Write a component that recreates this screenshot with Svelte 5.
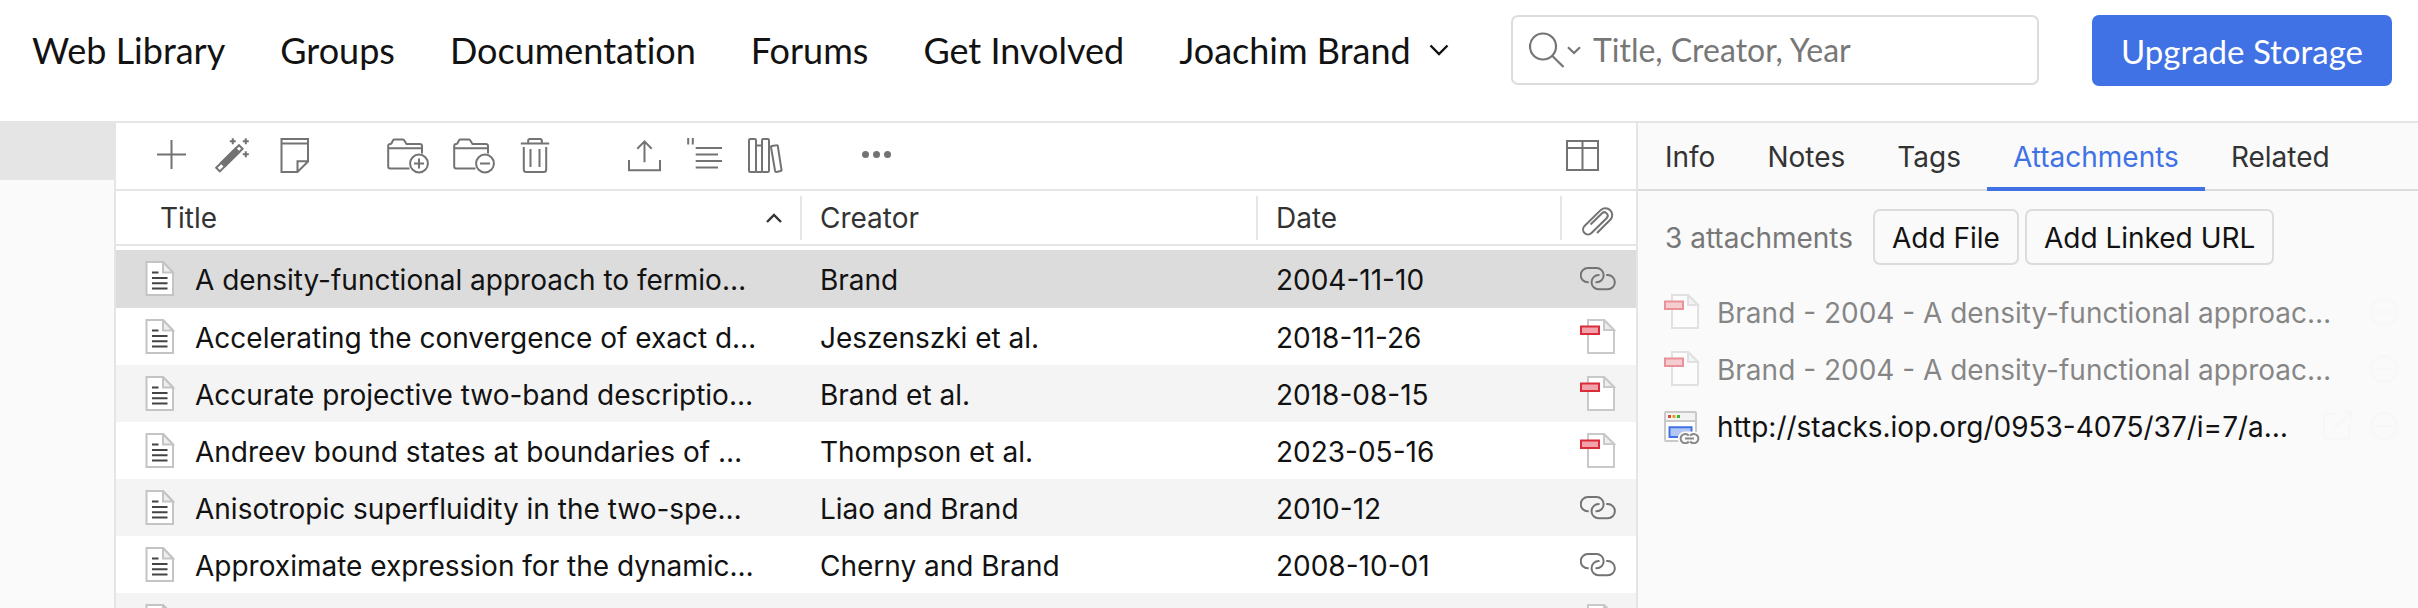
<script>
  const links = ['Web Library', 'Groups', 'Documentation', 'Forums', 'Get Involved'];
  const tabs = ['Info', 'Notes', 'Tags', 'Attachments', 'Related'];
  let activeTab = $state('Attachments');
  let selected = $state(0);
  let query = $state('');

  const items = [
    { title: 'A density-functional approach to fermio…', creator: 'Brand', date: '2004-11-10', kind: 'link' },
    { title: 'Accelerating the convergence of exact d…', creator: 'Jeszenszki et al.', date: '2018-11-26', kind: 'pdf' },
    { title: 'Accurate projective two-band descriptio…', creator: 'Brand et al.', date: '2018-08-15', kind: 'pdf' },
    { title: 'Andreev bound states at boundaries of …', creator: 'Thompson et al.', date: '2023-05-16', kind: 'pdf' },
    { title: 'Anisotropic superfluidity in the two-spe…', creator: 'Liao and Brand', date: '2010-12', kind: 'link' },
    { title: 'Approximate expression for the dynamic…', creator: 'Cherny and Brand', date: '2008-10-01', kind: 'link' },
    { title: '', creator: '', date: '', kind: 'pdf' }
  ];

  const attachments = [
    { name: 'Brand - 2004 - A density-functional approac…', kind: 'pdf' },
    { name: 'Brand - 2004 - A density-functional approac…', kind: 'pdf' },
    { name: 'http://stacks.iop.org/0953-4075/37/i=7/a…', kind: 'web' }
  ];
</script>

{#snippet pdf()}
  <svg class="icon" viewBox="0 0 36 36" aria-hidden="true">
    <path d="M8 1H24L34 11V34H8Z" fill="#fff" stroke="#c9c9c9" stroke-width="2" />
    <path d="M24 1V11H34Z" fill="#eee" stroke="#c9c9c9" stroke-width="2" />
    <path d="M1 7.5H19V15H1Z" fill="#f1a2aa" stroke="#db2c3a" stroke-width="2" />
  </svg>
{/snippet}

{#snippet folder()}
  <path d="M37 15.5V8.2Q37 6 34.8 6H21.5L19 2Q18.6 1.4 17.8 1.4H9.4Q8.6 1.4 8.2 2L6.4 5.4Q6 6 5.2 6Q3.2 6 3.2 8V28.4Q3.2 30.4 5.2 30.4H24.5M3.2 10.2H37" />
  <circle cx="34" cy="25.5" r="8.9" />
{/snippet}

<div class="app">
  <header>
    <nav aria-label="Site">
      {#each links as link}
        <a href="#{link}">{link}</a>
      {/each}
      <button class="user">
        Joachim Brand
        <svg width="20" height="12" viewBox="0 0 20 12" aria-hidden="true"><path d="M1.5 1.5 10 10 18.500 1.500" fill="none" stroke="#111" stroke-width="2.4" /></svg>
      </button>
    </nav>
    <div class="search">
      <button aria-label="Search mode">
        <svg width="54" height="36" viewBox="0 0 54 36" fill="none" stroke="#757575" stroke-width="2.2" aria-hidden="true">
          <circle cx="14" cy="14.5" r="13" />
          <path d="M23.2 23.8 34.5 35M39 15.2l6 5.8 6-5.8" />
        </svg>
      </button>
      <input type="search" placeholder="Title, Creator, Year" aria-label="Title, Creator, Year" bind:value={query} />
    </div>
    <button class="upgrade">Upgrade Storage</button>
  </header>

  <div class="body">
    <aside class="side"><div class="current"></div></aside>

    <main>
      <div class="toolbar">
        <div class="group">
          <button aria-label="New Item"><svg class="icon" viewBox="0 0 36 36"><path d="M17.5 2v29M3 16.5h29" /></svg></button>
          <button aria-label="Add by Identifier">
            <svg class="icon" viewBox="0 0 36 36">
              <path d="M24 7.2 27.6 10.8 4.8 33.4 1.2 29.8Z" />
              <path d="M20.5 10.7 24.1 14.3 9.8 28.4 6.2 24.8Z" fill="#737373" />
              <path d="M17.8.3v6M14.8 3.3h6M30.8.3v6M27.8 3.3h6M30.8 13.3v6M27.8 16.3h6" />
            </svg>
          </button>
          <button aria-label="Add Note"><svg class="icon" viewBox="0 0 36 36"><path d="M5.5 1H32V23.5L21.5 34H5.5ZM5.5 5.5H32M21.5 34V23.2H32" /></svg></button>
        </div>
        <div class="group tight">
          <button aria-label="Add to Collection"><svg class="icon wide" viewBox="0 0 44 36">{@render folder()}<path d="M34 20.5v10M29 25.5h10" /></svg></button>
          <button aria-label="Remove from Collection"><svg class="icon wide" viewBox="0 0 44 36">{@render folder()}<path d="M29 25.5h10" /></svg></button>
          <button aria-label="Move to Trash">
            <svg class="icon" viewBox="0 0 36 36"><path d="M3.8 5.5H32.2M11.2 5.5V2.6Q11.2 1 12.8 1H23.2Q24.8 1 24.8 2.6V5.5M6.8 9V31.5Q6.8 34 9.3 34H26.7Q29.2 34 29.2 31.5V9M13.5 11V29M22.5 11V29" /></svg>
          </button>
        </div>
        <div class="group">
          <button aria-label="Export"><svg class="icon" viewBox="0 0 36 36"><path d="M3 22V32.3H34V22M18.5 24.3V3M11.3 10.8 18.5 3.4 25.7 10.8" /></svg></button>
          <button aria-label="Create Citations"><svg class="icon" viewBox="0 0 36 36"><path d="M1.2 0V6.5M5.8 0V6.5M8.7 10H35M8.7 16.5H31M8.7 23H35M8.7 29.6H31" /></svg></button>
          <button aria-label="Create Bibliography">
            <svg class="icon" viewBox="0 0 36 36"><rect x="1" y="1" width="7" height="33" rx="1.2" /><path d="M8 7.5H14M8 34H14" /><rect x="14" y="1" width="7" height="33" rx="1.2" /><path d="M23.8 8 28.6 7.2Q29.6 7 29.8 8L33.5 31.8Q33.7 32.9 32.6 33.1L28.4 33.9Q27.3 34 27.1 33L23 9.2Q22.8 8.2 23.8 8Z" /></svg>
          </button>
        </div>
        <button aria-label="More"><svg class="icon" viewBox="0 0 36 36"><g fill="#737373" stroke="none"><circle cx="8.5" cy="16.5" r="3.5" /><circle cx="19.5" cy="16.5" r="3.5" /><circle cx="30.5" cy="16.5" r="3.5" /></g></svg></button>
        <button class="columns" aria-label="Column Selector"><svg class="icon" viewBox="0 0 36 36"><path d="M3 3H34V32H3ZM3 10H34M18.5 3V32" /></svg></button>
      </div>

      <table>
        <colgroup><col class="c-title" /><col class="c-creator" /><col class="c-date" /><col /></colgroup>
        <thead>
          <tr>
            <th class="first">
              <div>Title<svg width="16" height="10" viewBox="0 0 16 10" aria-label="sorted ascending"><path d="M1 9 8 2l7 7" fill="none" stroke="#333" stroke-width="2.4" /></svg></div>
            </th>
            <th><div>Creator</div></th>
            <th><div>Date</div></th>
            <th class="last">
              <div>
                <svg class="icon" viewBox="0 0 36 36" aria-label="Attachments"><path d="M17 33 30.5 19.5A6.8 6.8 0 0 0 20.9 9.9L4.5 26A4.95 4.95 0 0 0 11.5 33L26.8 18A3.4 3.4 0 0 0 22 13.2L10.5 24.5" /></svg>
              </div>
            </th>
          </tr>
        </thead>
        <tbody>
          {#each items as item, i}
            <tr class:selected={i === selected} onclick={() => (selected = i)}>
              <td class="title">
                <div>
                  <svg class="icon" viewBox="0 0 36 36" aria-hidden="true">
                    <path d="M4.5 1H21L31 11.5V34H4.5Z" fill="#fff" stroke="#c4c4c4" stroke-width="2" />
                    <path d="M21 1V11.5H31Z" fill="#eee" stroke="#c4c4c4" stroke-width="2" />
                    <path d="M10 11.5h6.5M10 17h15.5M10 22.3h15.5M10 27.6h15.5" stroke="#444" stroke-width="2" />
                  </svg>
                  <span>{item.title}</span>
                </div>
              </td>
              <td><span>{item.creator}</span></td>
              <td><span>{item.date}</span></td>
              <td class="last">
                {#if item.kind === 'pdf'}
                  {@render pdf()}
                {:else}
                  <svg class="icon" viewBox="0 0 36 36" aria-hidden="true"><path d="M8.7 21.3H7.9A7.15 7.15 0 0 1 7.9 7H16.5A7.15 7.15 0 0 1 16.5 21.3H15.5M19.5 14H18.7A7.15 7.15 0 0 0 18.7 28.3H27.7A7.15 7.15 0 0 0 27.7 14H26.2" /></svg>
                {/if}
              </td>
            </tr>
          {/each}
        </tbody>
      </table>
    </main>

    <section class="panel">
      <div class="tabs" role="tablist">
        {#each tabs as tab}
          <button role="tab" aria-selected={tab === activeTab} class:active={tab === activeTab} onclick={() => (activeTab = tab)}>{tab}</button>
        {/each}
      </div>
      <div class="actions">
        <span>3 attachments</span>
        <button>Add File</button>
        <button>Add Linked URL</button>
      </div>
      <ul>
        {#each attachments as file}
          <li>
            <div class="file" class:dim={file.kind === 'pdf'}>
              {#if file.kind === 'pdf'}
                {@render pdf()}
              {:else}
                <svg class="icon" viewBox="0 0 36 36" aria-hidden="true">
                  <rect x="1" y="4" width="31" height="29" rx="1" fill="#fff" stroke="#c9c9c9" stroke-width="2" />
                  <path d="M2 5H31V12H2Z" fill="#f3f3f3" stroke="none" />
                  <path d="M1 13H32" stroke="#c9c9c9" stroke-width="2" />
                  <g stroke="none"><path d="M4 7h3v3h-3z" fill="#e3483f" /><path d="M8.5 7h3v3h-3z" fill="#e3a020" /><path d="M13 7h3v3h-3z" fill="#3cb535" /></g>
                  <path d="M5.5 19.3H27.5V29H5.5Z" fill="#b3c7f5" stroke="#4072e5" stroke-width="2" />
                  <path d="M20.7 30.6H30.3" stroke="#fafafa" stroke-width="14" stroke-linecap="round" />
                  <g fill="none" stroke="#888" stroke-width="2"><path d="M24.8 27.7A4.6 4.6 0 1 0 24.8 33.5M26.2 27.7A4.6 4.6 0 1 1 26.2 33.5M21 30.6H30" /></g>
                </svg>
              {/if}
              <span>{file.name}</span>
            </div>
            <div class="tools">
              {#if file.kind === 'web'}
                <button aria-label="Open"><svg class="icon" viewBox="0 0 36 36"><path d="M20 6H5V31H30V17M15 21 32 4M24 3.5H32.5V12" /></svg></button>
              {/if}
              <button aria-label="Delete"><svg class="icon" viewBox="0 0 36 36"><circle cx="18" cy="18" r="13" /><path d="M11 18h14" /></svg></button>
            </div>
          </li>
        {/each}
      </ul>
    </section>
  </div>
</div>

<style>
  .app {
    height: 100vh;
    overflow: hidden;
    display: flex;
    flex-direction: column;
    background: #fff;
    color: #121212;
    font: 28px/36px Inter, sans-serif;
  }
  button {
    margin: 0;
    padding: 0;
    border: 0;
    background: none;
    font: inherit;
    color: inherit;
    cursor: pointer;
  }
  svg { flex: none; }
  .icon {
    display: block;
    width: 36px;
    height: 36px;
    fill: none;
    stroke: #737373;
    stroke-width: 2;
  }
  .icon.wide { width: 44px; }

  header {
    flex: none;
    display: flex;
    align-items: flex-start;
    padding: 15px 26px 35px 32px;
    border-bottom: 2px solid #e5e5e5;
    font-family: Lato, sans-serif;
    font-variant-ligatures: none;
  }
  nav {
    flex: 1;
    display: flex;
    align-items: center;
    gap: 55px;
    height: 69px;
    font-size: 36px;
    white-space: nowrap;
  }
  nav a { color: inherit; text-decoration: none; }
  .user { display: flex; align-items: center; gap: 18px; }
  .search {
    box-sizing: border-box;
    width: 528px;
    height: 70px;
    margin-right: 53px;
    padding: 0 16px;
    display: flex;
    align-items: center;
    gap: 10px;
    border: 2px solid #dcdcdc;
    border-radius: 7px;
  }
  .search button svg { display: block; }
  input {
    flex: 1;
    min-width: 0;
    padding: 0;
    border: 0;
    outline: 0;
    background: none;
    font: 32px/40px Lato, sans-serif;
    color: #121212;
  }
  input::placeholder { color: #777; opacity: 1; }
  .upgrade {
    height: 71px;
    padding: 0 29px;
    border-radius: 7px;
    background: #4072e5;
    color: #fff;
    font-size: 33px;
    white-space: nowrap;
  }

  .body {
    flex: 1;
    min-height: 0;
    display: grid;
    grid-template-columns: 114px minmax(0, 1fr) 780px;
  }
  .side { background: #fafafa; }
  .current { height: 57px; background: #e5e5e5; }
  main {
    min-height: 0;
    overflow: hidden;
    border-left: 2px solid #e5e5e5;
    border-right: 2px solid #e5e5e5;
  }
  .toolbar {
    display: flex;
    align-items: center;
    gap: 73px;
    height: 66px;
    padding: 0 36px 0 38px;
    border-bottom: 2px solid #e5e5e5;
  }
  .group { display: flex; gap: 25px; }
  .group.tight { gap: 22px; }
  .columns { margin-left: auto; }

  table {
    width: 100%;
    table-layout: fixed;
    border-collapse: separate;
    border-spacing: 0;
  }
  .c-title { width: 45.13%; }
  .c-creator { width: 30%; }
  .c-date { width: 20%; }
  th {
    height: 53px;
    padding: 0;
    border-bottom: 2px solid #e5e5e5;
    text-align: left;
    font-weight: 400;
    color: #333;
  }
  th div {
    display: flex;
    align-items: center;
    justify-content: space-between;
    height: 44px;
    padding: 0 18px;
    border-right: 2px solid #e5e5e5;
  }
  th.first div { padding-left: 44px; }
  th.last div { border-right: 0; }
  tbody::before { content: ''; display: block; height: 4px; }
  td {
    height: 57px;
    padding: 0 18px;
    overflow: hidden;
    white-space: nowrap;
  }
  tbody tr:first-child td { height: 58px; }
  td span, .file span { display: block; padding-top: 2px; }
  tbody tr:nth-child(odd) { background: #f4f4f4; }
  tbody tr.selected { background: #dcdcdc; }
  td.title { padding-left: 26px; }
  td.title div { display: flex; align-items: center; gap: 17px; }

  .panel { background: #fafafa; }
  .tabs {
    display: flex;
    height: 66px;
    padding-left: 1px;
    border-bottom: 2px solid #dcdcdc;
    color: #333;
  }
  .tabs button {
    padding: 4px 26px 0;
    margin-bottom: -2px;
    border-bottom: 4px solid transparent;
  }
  .tabs .active { color: #4072e5; border-color: #4072e5; }
  .actions {
    display: flex;
    align-items: center;
    gap: 6px;
    padding: 18px 27px;
  }
  .actions span { margin-right: 14px; padding-top: 2px; color: #777; }
  .actions button {
    height: 56px;
    padding: 2px 17px 0;
    border: 2px solid #dcdcdc;
    border-radius: 7px;
  }
  ul { margin: 0; padding: 0; list-style: none; }
  li {
    display: flex;
    align-items: center;
    justify-content: space-between;
    height: 57px;
    padding: 0 16px 0 26px;
    white-space: nowrap;
  }
  .file { display: flex; align-items: center; gap: 17px; }
  .dim { opacity: 0.5; }
  .tools { display: flex; gap: 11px; opacity: 0.01; }
</style>
